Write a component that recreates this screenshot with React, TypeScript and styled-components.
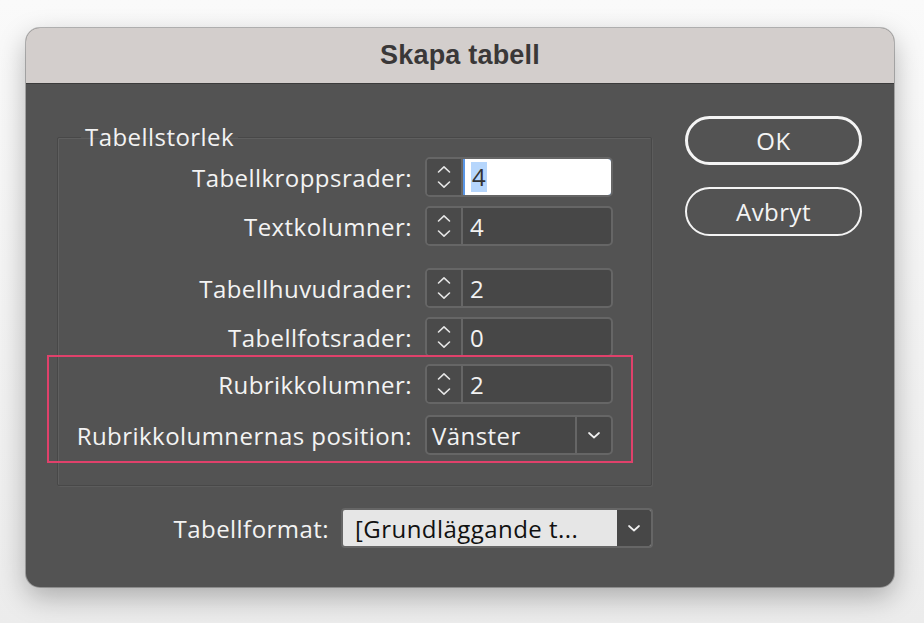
import React from "react";
import styled, { createGlobalStyle, css } from "styled-components";

const Global = createGlobalStyle`
  html, body { margin: 0; padding: 0; }
  body {
    width: 924px;
    height: 623px;
    overflow: hidden;
    background: linear-gradient(#fafafa, #ececec);
    font-family: "Open Sans", "Noto Sans", "Liberation Sans", sans-serif;
    font-weight: 500;
    letter-spacing: 0.45px;
  }
`;

const Page = styled.div`
  width: 924px;
  height: 623px;
  box-sizing: border-box;
  padding: 28px 30px 36px 26px;
`;

const Window = styled.div`
  width: 868px;
  height: 559px;
  border-radius: 14px;
  overflow: hidden;
  display: flex;
  flex-direction: column;
  background: #535353;
  box-shadow: 0 10px 28px rgba(0, 0, 0, 0.28), 0 0 0 1px rgba(0, 0, 0, 0.25);
`;

const TitleBar = styled.div`
  height: 55px;
  flex: none;
  background: #d3cecc;
  border-bottom: 1px solid #3b3b3b;
  display: flex;
  align-items: center;
  justify-content: center;
`;

const Title = styled.div`
  font-family: "Liberation Sans", Arial, sans-serif;
  font-size: 27px;
  font-weight: 700;
  letter-spacing: 0.2px;
  color: #3a3838;
`;

const Body = styled.div`
  flex: 1;
  display: flex;
  padding: 38px 32px 0 31px;
  gap: 33px;
`;

const Main = styled.div`
  width: 595px;
  display: flex;
  flex-direction: column;
`;

const Group = styled.fieldset`
  margin: 0;
  padding: 5px 38px 30px 0;
  border: 1px solid #484848;
  box-shadow: inset 1px 1px 0 #5f5f5f, 1px 1px 0 #5c5c5c;
  border-radius: 2px;
`;

const Legend = styled.legend`
  margin-left: 23px;
  padding: 0 4px;
  font-size: 24px;
  line-height: 30px;
  color: #f2f2f2;
`;

const Grid = styled.div`
  display: grid;
  grid-template-columns: 1fr 188px;
  column-gap: 13px;
  align-items: center;
`;

const Label = styled.div`
  text-align: right;
  font-size: 24px;
  color: #f3f3f3;
  white-space: nowrap;
`;

const RowSet = styled.div<{ $gap: number }>`
  display: contents;
  & > * {
    margin-top: ${(p) => p.$gap}px;
  }
`;

const Control = styled.div`
  height: 40px;
  box-sizing: border-box;
  display: flex;
  border: 2px solid #666666;
  border-radius: 5px;
  background: #474747;
  overflow: hidden;
`;

const Stepper = styled.div`
  width: 34px;
  flex: none;
  display: flex;
  align-items: center;
  justify-content: center;
  background: #4a4a4a;
  border-right: 2px solid #666666;
`;

const Field = styled.div<{ $focused?: boolean }>`
  flex: 1;
  display: flex;
  align-items: center;
  padding-left: 7px;
  font-size: 24px;
  color: #f2f2f2;
  ${(p) =>
    p.$focused &&
    css`
      background: #ffffff;
      color: #333;
      box-shadow: inset 0 0 0 2px #5a96e6;
      margin: -2px -2px -2px 0;
      padding-left: 8px;
      border-radius: 0 5px 5px 0;
    `}
`;

const Selected = styled.span`
  background: #b6d6fc;
  padding: 0 1px;
  line-height: 30px;
`;

const SelectValue = styled.div`
  flex: 1;
  display: flex;
  align-items: center;
  padding-left: 5px;
  font-size: 24px;
  color: #f2f2f2;
`;

const SelectBtn = styled.div`
  width: 34px;
  flex: none;
  display: flex;
  align-items: center;
  justify-content: center;
  border-left: 2px solid #666666;
`;

const HighlightBox = styled.div`
  grid-column: 1 / span 2;
  position: relative;
  display: grid;
  grid-template-columns: 1fr 188px;
  column-gap: 13px;
  row-gap: 11px;
  align-items: center;
  margin-top: 7px;
  &::after {
    content: "";
    position: absolute;
    top: -9px;
    bottom: -8px;
    left: -11px;
    right: -20px;
    border: 2.5px solid #e0416b;
    pointer-events: none;
  }
`;

const FormatRow = styled.div`
  display: flex;
  justify-content: flex-end;
  align-items: center;
  gap: 12px;
  margin-top: 22px;
  margin-right: -1px;
`;

const FormatSelect = styled.div`
  width: 312px;
  height: 40px;
  box-sizing: border-box;
  display: flex;
  border: 2px solid #666;
  border-radius: 4px;
  overflow: hidden;
  background: #e6e6e6;
`;

const FormatValue = styled.div`
  flex: 1;
  display: flex;
  align-items: center;
  padding-left: 12px;
  font-size: 24px;
  color: #111;
  white-space: nowrap;
  overflow: hidden;
`;

const FormatBtn = styled.div`
  width: 34px;
  flex: none;
  display: flex;
  align-items: center;
  justify-content: center;
  background: #474747;
`;

const Side = styled.div`
  width: 177px;
  display: flex;
  flex-direction: column;
  gap: 22px;
  margin-top: -6px;
`;

const Button = styled.div<{ $default?: boolean }>`
  height: 49px;
  box-sizing: border-box;
  border-radius: 25px;
  border: ${(p) => (p.$default ? 3 : 2)}px solid #f4f4f4;
  display: flex;
  align-items: center;
  justify-content: center;
  font-size: 24px;
  color: #f4f4f4;
`;

const Spin = () => (
  <svg width="16" height="28" viewBox="0 0 16 28" fill="none">
    <path d="M2.5 9 L8 3.8 L13.5 9" stroke="#e6e6e6" strokeWidth="1.6" strokeLinecap="round" strokeLinejoin="round" />
    <path d="M2.5 19 L8 24.2 L13.5 19" stroke="#e6e6e6" strokeWidth="1.6" strokeLinecap="round" strokeLinejoin="round" />
  </svg>
);

const Chevron = () => (
  <svg width="14" height="9" viewBox="0 0 14 9" fill="none">
    <path d="M2 2 L7 6.5 L12 2" stroke="#f0f0f0" strokeWidth="1.7" strokeLinecap="round" strokeLinejoin="round" />
  </svg>
);

const SpinRow = ({ label, value, gap, focused }: { label: string; value: string; gap: number; focused?: boolean }) => (
  <RowSet $gap={gap}>
    <Label>{label}</Label>
    <Control>
      <Stepper>
        <Spin />
      </Stepper>
      <Field $focused={focused}>{focused ? <Selected>{value}</Selected> : value}</Field>
    </Control>
  </RowSet>
);

export default function App() {
  return (
    <>
      <Global />
      <Page>
        <Window>
          <TitleBar>
            <Title>Skapa tabell</Title>
          </TitleBar>
          <Body>
            <Main>
              <Group>
                <Legend>Tabellstorlek</Legend>
                <Grid>
                  <SpinRow label="Tabellkroppsrader:" value="4" gap={0} focused />
                  <SpinRow label="Textkolumner:" value="4" gap={9} />
                  <SpinRow label="Tabellhuvudrader:" value="2" gap={22} />
                  <SpinRow label="Tabellfotsrader:" value="0" gap={9} />
                  <HighlightBox>
                    <Label>Rubrikkolumner:</Label>
                    <Control>
                      <Stepper>
                        <Spin />
                      </Stepper>
                      <Field>2</Field>
                    </Control>
                    <Label>Rubrikkolumnernas position:</Label>
                    <Control>
                      <SelectValue>Vänster</SelectValue>
                      <SelectBtn>
                        <Chevron />
                      </SelectBtn>
                    </Control>
                  </HighlightBox>
                </Grid>
              </Group>
              <FormatRow>
                <Label>Tabellformat:</Label>
                <FormatSelect>
                  <FormatValue>[Grundläggande t...</FormatValue>
                  <FormatBtn>
                    <Chevron />
                  </FormatBtn>
                </FormatSelect>
              </FormatRow>
            </Main>
            <Side>
              <Button $default>OK</Button>
              <Button>Avbryt</Button>
            </Side>
          </Body>
        </Window>
      </Page>
    </>
  );
}
